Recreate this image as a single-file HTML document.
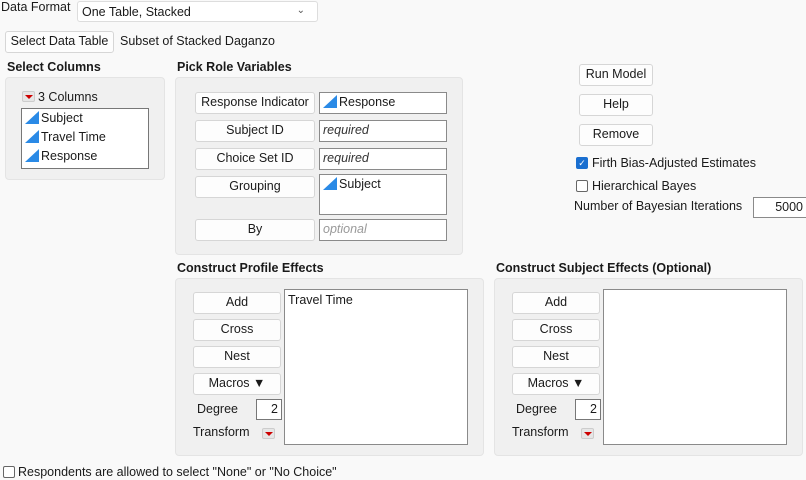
<!DOCTYPE html>
<html><head><style>
*{box-sizing:border-box}
body{margin:0;width:806px;height:480px;background:#f9f9f9;font-family:"Liberation Sans",sans-serif;font-size:12.5px;color:#1a1a1a;position:relative;overflow:hidden}
.a{position:absolute;white-space:nowrap}
.btn{position:absolute;background:#fdfdfd;border:1px solid #d6d6d6;border-radius:3px;text-align:center;line-height:19px}
.fld{position:absolute;background:#fff;border:1px solid #8a8a8a;padding-left:3px;line-height:19px}
.pan{position:absolute;background:#f0f0f0;border:1px solid #e4e4e4;border-radius:4px}
.h{position:absolute;font-weight:bold;font-size:12.5px}
.tri{display:inline-block;width:0;height:0;border-left:14px solid transparent;border-bottom:13px solid #2a8ae6;vertical-align:-2px;margin-right:2px}
.red{position:absolute;width:13px;height:11px;background:#e6e6e6;border:1px solid #ccc;border-radius:2px}
.red:after{content:"";position:absolute;left:2px;top:3px;border-left:4px solid transparent;border-right:4px solid transparent;border-top:4px solid #c00}
i{color:#333}
</style></head><body>
<div class="a" style="left:1px;top:0px">Data Format</div>
<div class="a" style="left:77px;top:1px;width:241px;height:21px;background:#fff;border:1px solid #ddd;border-radius:3px;padding-left:4px;line-height:20px">One Table, Stacked<span style="position:absolute;right:12px;top:-1px;font-size:10px;color:#555">&#8964;</span></div>
<div class="btn" style="left:5px;top:31px;width:109px;height:22px">Select Data Table</div>
<div class="a" style="left:120px;top:34px">Subset of Stacked Daganzo</div>

<div class="h" style="left:7px;top:60px">Select Columns</div>
<div class="pan" style="left:5px;top:77px;width:160px;height:103px"></div>
<div class="red" style="left:22px;top:91px"></div>
<div class="a" style="left:38px;top:90px">3 Columns</div>
<div class="fld" style="left:21px;top:108px;width:128px;height:61px;border-color:#777;line-height:19px;padding-left:3px">
<div><span class="tri"></span>Subject</div><div><span class="tri"></span>Travel Time</div><div><span class="tri"></span>Response</div></div>

<div class="h" style="left:177px;top:60px">Pick Role Variables</div>
<div class="pan" style="left:175px;top:77px;width:288px;height:178px"></div>
<div class="btn" style="left:195px;top:92px;width:120px;height:22px">Response Indicator</div>
<div class="btn" style="left:195px;top:120px;width:120px;height:22px">Subject ID</div>
<div class="btn" style="left:195px;top:148px;width:120px;height:22px">Choice Set ID</div>
<div class="btn" style="left:195px;top:176px;width:120px;height:22px">Grouping</div>
<div class="btn" style="left:195px;top:219px;width:120px;height:22px">By</div>
<div class="fld" style="left:319px;top:92px;width:128px;height:22px"><span class="tri"></span>Response</div>
<div class="fld" style="left:319px;top:120px;width:128px;height:22px"><i>required</i></div>
<div class="fld" style="left:319px;top:148px;width:128px;height:22px"><i>required</i></div>
<div class="fld" style="left:319px;top:174px;width:128px;height:41px"><span class="tri"></span>Subject</div>
<div class="fld" style="left:319px;top:219px;width:128px;height:22px"><i style="color:#999">optional</i></div>

<div class="btn" style="left:579px;top:64px;width:74px;height:22px">Run Model</div>
<div class="btn" style="left:579px;top:94px;width:74px;height:22px">Help</div>
<div class="btn" style="left:579px;top:124px;width:74px;height:22px">Remove</div>
<div class="a" style="left:576px;top:157px;width:12px;height:12px;background:#1a6fd0;border-radius:2px;color:#fff;font-size:9px;line-height:12px;text-align:center">&#10003;</div>
<div class="a" style="left:592px;top:156px">Firth Bias-Adjusted Estimates</div>
<div class="a" style="left:576px;top:180px;width:12px;height:12px;border:1px solid #666;border-radius:2px;background:#fff"></div>
<div class="a" style="left:592px;top:179px">Hierarchical Bayes</div>
<div class="a" style="left:574px;top:199px">Number of Bayesian Iterations</div>
<div class="fld" style="left:753px;top:197px;width:56px;height:21px;text-align:right;padding-right:5px">5000</div>

<div class="h" style="left:177px;top:261px">Construct Profile Effects</div>
<div class="pan" style="left:175px;top:278px;width:309px;height:178px"></div>
<div class="btn" style="left:193px;top:292px;width:88px;height:22px">Add</div>
<div class="btn" style="left:193px;top:319px;width:88px;height:22px">Cross</div>
<div class="btn" style="left:193px;top:346px;width:88px;height:22px">Nest</div>
<div class="btn" style="left:193px;top:373px;width:88px;height:22px">Macros &#9660;</div>
<div class="a" style="left:197px;top:402px">Degree</div>
<div class="fld" style="left:256px;top:399px;width:26px;height:21px;text-align:right;padding-right:3px;border-color:#777">2</div>
<div class="a" style="left:193px;top:425px">Transform</div>
<div class="red" style="left:262px;top:428px"></div>
<div class="fld" style="left:284px;top:289px;width:184px;height:156px;line-height:21px">Travel Time</div>

<div class="h" style="left:496px;top:261px">Construct Subject Effects (Optional)</div>
<div class="pan" style="left:494px;top:278px;width:309px;height:178px"></div>
<div class="btn" style="left:512px;top:292px;width:88px;height:22px">Add</div>
<div class="btn" style="left:512px;top:319px;width:88px;height:22px">Cross</div>
<div class="btn" style="left:512px;top:346px;width:88px;height:22px">Nest</div>
<div class="btn" style="left:512px;top:373px;width:88px;height:22px">Macros &#9660;</div>
<div class="a" style="left:516px;top:402px">Degree</div>
<div class="fld" style="left:575px;top:399px;width:26px;height:21px;text-align:right;padding-right:3px;border-color:#777">2</div>
<div class="a" style="left:512px;top:425px">Transform</div>
<div class="red" style="left:581px;top:428px"></div>
<div class="fld" style="left:603px;top:289px;width:184px;height:156px"></div>

<div class="a" style="left:3px;top:466px;width:12px;height:12px;border:1px solid #666;border-radius:2px;background:#fff"></div>
<div class="a" style="left:18px;top:465px">Respondents are allowed to select "None" or "No Choice"</div>
</body></html>
